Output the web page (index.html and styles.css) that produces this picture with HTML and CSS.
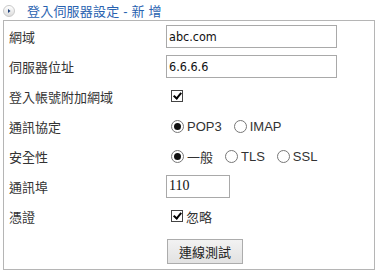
FILE: index.html
```html
<!DOCTYPE html>
<html lang="zh-Hant">
<head>
	<meta charset="utf-8" />
	<title>登入伺服器設定</title>
	<link rel="stylesheet" href="styles.css">
</head>
<body>
	<div class="panel">
		<div class="panel-head">
			<span class="head-icon">
				<svg width="12" height="12" viewBox="0 0 12 12">
					<path d="M5 4 L7.5 6 L5 8 Z" fill="#1d3f7a" />
				</svg>
			</span>
			<span class="head-title">登入伺服器設定 - 新 增</span>
		</div>

		<div class="panel-body">
			<div class="label">網域</div>
			<div class="field"><input class="text wide" type="text" value="abc.com"></div>

			<div class="label">伺服器位址</div>
			<div class="field"><input class="text wide" type="text" value="6.6.6.6"></div>

			<div class="label">登入帳號附加網域</div>
			<div class="field"><input class="check" type="checkbox" checked></div>

			<div class="label">通訊協定</div>
			<div class="field">
				<label class="opt"><input class="radio" type="radio" name="proto" checked>POP3</label>
				<label class="opt"><input class="radio" type="radio" name="proto">IMAP</label>
			</div>

			<div class="label">安全性</div>
			<div class="field">
				<label class="opt"><input class="radio" type="radio" name="sec" checked>一般</label>
				<label class="opt"><input class="radio" type="radio" name="sec">TLS</label>
				<label class="opt"><input class="radio" type="radio" name="sec">SSL</label>
			</div>

			<div class="label">通訊埠</div>
			<div class="field"><input class="text port" type="text" value="110"></div>

			<div class="label">憑證</div>
			<div class="field">
				<label class="opt"><input class="check" type="checkbox" checked>忽略</label>
			</div>

			<div class="label"></div>
			<div class="field actions"><button class="btn" type="button">連線測試</button></div>
		</div>
	</div>
</body>
</html>
```

FILE: styles.css
```css
body {
	margin: 0;
	background: #fff;
	font-family: 'Liberation Sans', 'Noto Sans CJK TC', sans-serif;
	font-size: 13px;
	color: #333;
}

.panel {
	width: 372px;
	margin-left: 3px;
}

/* header */

.panel-head {
	height: 20px;
	display: flex;
	align-items: center;
	gap: 12px;
}

.head-icon {
	width: 12px;
	height: 12px;
	border: 1px solid #c9c9c9;
	border-radius: 50%;
	box-sizing: border-box;
	background: linear-gradient(to bottom, #ffffff, #dcdcdc);
	display: flex;
	margin-top: 1px;
}

.head-icon svg {
	display: block;
	margin: -1px;
}

.head-title {
	color: #2862b0;
	font-size: 13px;
	letter-spacing: 0.2px;
}

/* form body */

.panel-body {
	box-sizing: border-box;
	height: 250px;
	border: 1px solid #b5b5b5;
	padding-left: 5px;
	display: grid;
	grid-template-columns: 157px 1fr;
	grid-template-rows: repeat(7, 30px) auto;
	align-items: center;
}

.label {
	color: #333;
	font-family: 'Noto Sans CJK TC', sans-serif;
}

.field {
	display: flex;
	align-items: center;
}

.text {
	box-sizing: border-box;
	height: 23px;
	margin: 0;
	padding: 0 2px;
	border: 1px solid #a9a9a9;
	font-size: 14px;
	color: #111;
	outline: none;
}

.text.wide {
	width: 171px;
	font-family: 'DejaVu Sans Condensed', 'DejaVu Sans', sans-serif;
	font-size: 12.5px;
}

.text.port {
	width: 64px;
	font-family: 'Liberation Serif', serif;
	font-size: 14px;
}

.opt {
	display: flex;
	align-items: center;
	margin-right: 12px;
}

.check {
	appearance: none;
	-webkit-appearance: none;
	width: 12px;
	height: 12px;
	margin: 0 3px 0 5px;
	border: 1px solid #444;
	background: #fff;
	position: relative;
}

.check:checked::after {
	content: '';
	position: absolute;
	left: 3px;
	top: 0;
	width: 3px;
	height: 6px;
	border: solid #000;
	border-width: 0 2px 2px 0;
	transform: rotate(40deg);
}

.radio {
	appearance: none;
	-webkit-appearance: none;
	width: 13px;
	height: 13px;
	margin: 0 3px 0 5px;
	border: 1px solid #777;
	border-radius: 50%;
	background: #fff;
	position: relative;
}

.radio:checked::after {
	content: '';
	position: absolute;
	left: 2px;
	top: 2px;
	width: 7px;
	height: 7px;
	border-radius: 50%;
	background: #111;
}

.opt + .opt .radio {
	margin-left: 0;
}

.actions {
	align-self: start;
	padding: 8px 0 4px;
}

.btn {
	width: 76px;
	height: 25px;
	margin-left: 1px;
	border: 1px solid #acacac;
	background: linear-gradient(to bottom, #f2f2f2, #e2e2e2);
	font-family: 'Noto Sans CJK TC', sans-serif;
	font-size: 13px;
	color: #222;
	padding: 0;
}
```
